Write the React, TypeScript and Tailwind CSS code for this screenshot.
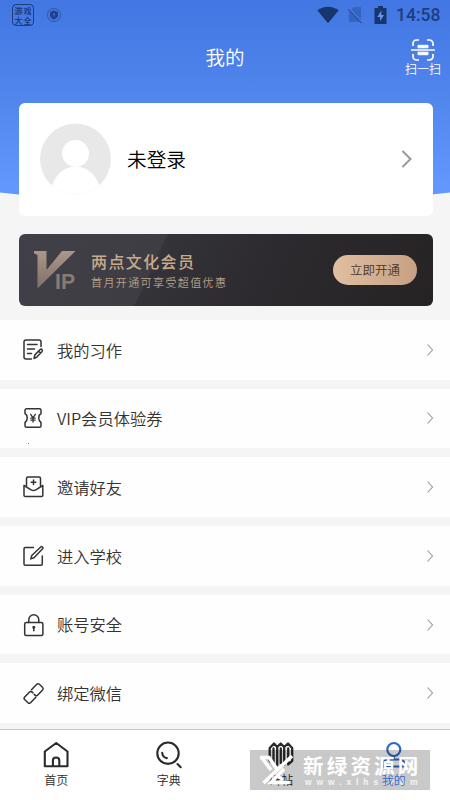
import React from "react";

const Svg = ({
  size = 22,
  className = "",
  children,
}: {
  size?: number;
  className?: string;
  children: React.ReactNode;
}) => (
  <svg
    width={size}
    height={size}
    viewBox={`0 0 ${size} ${size}`}
    fill="none"
    stroke="currentColor"
    strokeWidth={1.5}
    strokeLinecap="round"
    strokeLinejoin="round"
    className={className}
  >
    {children}
  </svg>
);

const menuItems = [
  {
    label: "我的习作",
    icon: (
      <Svg>
        <path d="M9.500 20H4a2 2 0 0 1-2-2V3a2 2 0 0 1 2-2h13a2 2 0 0 1 2 2v4.500M5.500 5.500H15M5.500 10h7M5.500 14.500h4" />
        <path d="m12 19.500.9-3.600 5.300-5.400c1.200-1.100 2.900.5 1.900 1.900l-5.300 5.700-2.800 1.400Zm4.500-7.500 2 2" />
      </Svg>
    ),
  },
  {
    label: "VIP会员体验券",
    icon: (
      <Svg>
        <path d="M4.500 1.800h13A1.500 1.500 0 0 1 19 3.300v3.200c-3 1.800-3 7.200 0 9v3.200a1.500 1.500 0 0 1-1.500 1.500h-13A1.500 1.500 0 0 1 3 18.700v-3.200c3-1.800 3-7.200 0-9V3.300a1.500 1.500 0 0 1 1.500-1.500Z" />
        <path strokeWidth={1.3} d="m8.700 7.300 2.300 3.500 2.300-3.500M11 10.800V15M8.800 11.100h4.400M8.800 13.100h4.400" />
      </Svg>
    ),
  },
  {
    label: "邀请好友",
    icon: (
      <Svg>
        <path d="M4.500 10V2.500A1.500 1.500 0 0 1 6 1h11a1.500 1.500 0 0 1 1.500 1.500V10M11.500 4v4.600M9.200 6.300h4.600" />
        <path d="M2 9.500v9.800c0 .7.500 1.300 1.300 1.300h16.200c.8 0 1.300-.6 1.300-1.300V9.500l-7 4.400c-1.500.9-3.200.9-4.700 0L2 9.500Z" />
      </Svg>
    ),
  },
  {
    label: "进入学校",
    icon: (
      <Svg>
        <path d="M11.500 2.500H3.200A1.200 1.200 0 0 0 2 3.700v15.400c0 .7.500 1.200 1.200 1.200h15.900c.7 0 1.200-.5 1.200-1.200V11" />
        <path d="m8.800 13.900 1-3.400 8.900-8.500c1.200-1 2.900.6 1.900 1.800L12 12.700l-3.200 1.200Z" />
      </Svg>
    ),
  },
  {
    label: "账号安全",
    icon: (
      <Svg size={24}>
        <rect x="2.700" y="9.500" width="18.200" height="13" rx="1.500" />
        <path d="M6.800 9.500V6.800a5 5 0 0 1 10 0v2.700M11.800 14.500v3.200" />
        <circle cx="11.800" cy="14.200" r=".8" fill="currentColor" />
      </Svg>
    ),
  },
  {
    label: "绑定微信",
    icon: (
      <Svg size={24}>
        <path d="m9.500 8.800 5-5.300c.9-.9 1.900-1 2.800-.2l3.200 2.900c.9.900.9 1.900.1 2.800L15.800 14c-.7.700-1.500.9-2.400.5" />
        <path d="M9.800 10.800c-1-.5-1.800-.4-2.500.4l-4.600 4.900c-.8.900-.8 1.900.1 2.700L6 21.700c.9.800 2 .7 2.800-.2l5-5.300" />
        <path d="m9.800 10.800 1.200 1M13.400 14.500l-1.200-1.100" />
      </Svg>
    ),
  },
];

const tabs = [
  {
    label: "首页",
    icon: (
      <Svg size={28}>
        <path strokeWidth={2.100} d="M2.800 10.500 14.200 2l11.300 8.500v14.800H2.800V10.500Zm8.100 14.500v-5.500c0-4 6.400-4 6.400 0V25" />
      </Svg>
    ),
  },
  {
    label: "字典",
    icon: (
      <Svg size={28}>
        <circle cx="13" cy="12.200" r="10.700" strokeWidth={2.100} />
        <path strokeWidth={2.100} d="M7.200 11.700c.2 2.800 2 4.900 4.600 5.400M22.500 23l3.200 3.200" />
      </Svg>
    ),
  },
  {
    label: "碑帖",
    icon: (
      <Svg size={28}>
        <path
          strokeWidth={2.300}
          d="M2.700 20V7L7 2.500 10.200 6v18M6.500 7.500v15L2.700 20M10.200 6l3.500-3.500L17.200 6v18M13.800 7.500V22M17.200 6l3.800-3.500L25.200 7v13l-4 3.500v-16"
        />
      </Svg>
    ),
  },
  {
    label: "我的",
    active: true,
    icon: (
      <Svg size={28}>
        <circle cx="13.800" cy="8.500" r="6.500" strokeWidth={2.200} />
        <path strokeWidth={2.200} d="M13.800 15.500v3M3 25.500v-2a5 5 0 0 1 5-5h11.600a5 5 0 0 1 5 5v2H3Z" />
      </Svg>
    ),
  },
];

const StatusBar = () => (
  <div className="flex h-[30px] items-center justify-between pl-3 pr-[10px] text-[#1d3e7e]">
    <div className="flex items-center gap-[13px]">
      <div className="grid h-[22px] w-[22px] grid-cols-2 place-items-center rounded-[4px] border border-current px-px text-[8px] font-bold leading-[9px]">
        <span>游</span>
        <span>戏</span>
        <span>大</span>
        <span>全</span>
      </div>
      <svg width="14" height="14" viewBox="0 0 14 14" className="opacity-90">
        <circle cx="7" cy="7" r="6.500" fill="none" stroke="currentColor" strokeWidth=".6" />
        <path d="m7 2.500 4 1.400v3.400c0 2.200-1.800 3.400-4 4.400-2.200-1-4-2.200-4-4.400V3.900l4-1.400Z" fill="currentColor" />
        <path d="M7 5v3.500M6 6.500h2" stroke="#4d78cf" strokeWidth=".7" />
      </svg>
    </div>
    <div className="flex items-center">
      <svg width="22" height="18" viewBox="0 0 22 18" fill="#17356f">
        <path d="M.3 4.200C6.500-.5 15.500-.5 21.700 4.200L11 17.300.3 4.200Z" />
      </svg>
      <svg width="15" height="18" viewBox="0 0 15 18" className="ml-[9px]">
        <path d="M1 6 5.500 1h7.500v15H1V6Z" fill="#3465bf" />
        <path d="m.5 2 13.500 14.500" stroke="#477be0" strokeWidth="2" />
        <path d="m0 3 13.500 14" stroke="#2952a3" strokeWidth="1.100" />
      </svg>
      <svg width="14" height="18" viewBox="0 0 14 18" className="ml-[11px]">
        <path d="M4 0h5v2h3.500v16H.5V2H4V0Z" fill="#17356f" />
        <path d="M7.300 4.500 3.300 11h2.800v4.300L10 9H7.300V4.500Z" fill="#6794ec" />
      </svg>
      <span className="ml-[8px] w-[44px] whitespace-nowrap pt-px font-[Roboto] text-[17.500px] font-medium leading-none">
        14:58
      </span>
    </div>
  </div>
);

const Header = () => (
  <header className="grid grid-cols-[1fr_auto_1fr] pt-[7px] text-white">
    <h1 className="col-start-2 pt-[6px] text-[19.500px] font-[350] leading-[28px]">我的</h1>
    <div className="flex flex-col items-center justify-self-end pr-[9px] pt-[2px]">
      <svg width="24" height="22" viewBox="0 0 24 22" fill="none" stroke="currentColor" strokeWidth="1.700">
        <path d="M2 7V4.500A3.500 3.500 0 0 1 5.500 1H8M16 1h2.500A3.500 3.500 0 0 1 22 4.500V7M2 15v2.500A3.500 3.500 0 0 0 5.500 21H8M16 21h2.500a3.500 3.500 0 0 0 3.500-3.500V15M0 11h24" />
        <path d="M7 6.300h10v2.500H7zM7 13.200h10v2.500H7z" fill="currentColor" strokeWidth="1" />
      </svg>
      <span className="pb-px text-[12px] font-[350] leading-[15px]">扫一扫</span>
    </div>
  </header>
);

const VipBanner = () => (
  <section className="ml-[19px] mr-[17px] mt-[18px] flex h-[72px] items-center rounded-[6px] bg-[linear-gradient(115deg,#414048_0%,#3e3d44_33%,#343339_33.500%,#2c2a2e_60%,#252323_100%)] pl-[15px] pr-[16px]">
    <svg width="44" height="40" viewBox="0 0 44 40" className="overflow-visible">
      <defs>
        <linearGradient id="vip" x1="0" x2="0" y1="0" y2="1">
          <stop offset="0" stopColor="#aa978c" />
          <stop offset="1" stopColor="#806f68" />
        </linearGradient>
      </defs>
      <path d="M0 1h12.500v19L28 1h13.500L3.500 38.500V5L0 3.500V1Z" fill="url(#vip)" />
      <text x="21" y="38.500" fill="#8b7a72" fontSize="22" fontWeight="700" fontFamily="Liberation Sans, sans-serif" textLength="20" lengthAdjust="spacingAndGlyphs">
        IP
      </text>
    </svg>
    <div className="ml-[13px] flex-1 whitespace-nowrap text-[#c7aa8c]">
      <div className="text-[16px] font-medium leading-[22px] tracking-[1.400px]">两点文化会员</div>
      <div className="pt-px text-[11px] font-[350] leading-[18px] tracking-[1.400px] text-[#b9a189]">首月开通可享受超值优惠</div>
    </div>
    <button className="h-[30px] w-[84px] rounded-full bg-linear-to-r from-[#dfc0a0] to-[#c7a083] text-[12.500px] font-[350] text-[#493729]">
      立即开通
    </button>
  </section>
);

const Watermark = () => (
  <div className="absolute bottom-[10px] right-[20px] flex h-10 w-[180px] bg-black/21 text-white">
    <svg width="50" height="40" viewBox="0 0 50 40" fill="none" stroke="currentColor" strokeWidth="3.500">
      <path d="M10 7.500h9l7.500 11M42 6 13.500 33M12 8l9 12" />
      <path d="M34 19 21 32.500h18.500M28 26l5 4" />
    </svg>
    <div className="flex flex-col whitespace-nowrap pt-[4px]">
      <span className="ml-[3px] text-[20.500px] font-bold leading-[22px] tracking-[3.200px]">新绿资源网</span>
      <span className="ml-[5px] pt-px font-['Liberation_Sans'] text-[8.500px] font-bold leading-[10px] tracking-[4.900px] text-white/80">
        www.xlhs.com
      </span>
    </div>
  </div>
);

export default function App() {
  return (
    <div className="relative flex h-[800px] w-[450px] flex-col overflow-hidden bg-[#f5f5f5] font-['Noto_Sans_CJK_SC',sans-serif]">
      {/* blue backdrop with a curved lower edge */}
      <svg className="absolute left-0 top-0" width="450" height="216" viewBox="0 0 450 216">
        <defs>
          <linearGradient id="backdrop" x1="0" x2="0" y1="0" y2="1">
            <stop offset="0" stopColor="#4276e2" />
            <stop offset=".45" stopColor="#5085ec" />
            <stop offset=".9" stopColor="#6297fd" />
          </linearGradient>
        </defs>
        <path d="M0 0h450v192.500Q225 220 0 192.500Z" fill="url(#backdrop)" />
      </svg>

      <div className="relative flex flex-1 flex-col">
        <StatusBar />
        <Header />

        <section className="ml-[19px] mr-[17px] mt-[25.500px] flex h-[113.500px] items-center rounded-[6px] bg-white pl-[21px] pr-[19px]">
          <svg width="72" height="72" viewBox="0 0 72 72">
            <clipPath id="avatar">
              <circle cx="35.500" cy="36" r="35.500" />
            </clipPath>
            <g clipPath="url(#avatar)">
              <rect width="72" height="72" fill="#e8e8e8" />
              <circle cx="35.500" cy="30.500" r="13.500" fill="#fff" />
              <path d="M10.500 69c2-14 12-25.500 25-25.500S59 55 61 69v3H10.500Z" fill="#fff" />
            </g>
          </svg>
          <span className="ml-[15px] flex-1 text-[19.700px] font-[350] text-black">未登录</span>
          <svg width="14" height="20" viewBox="0 0 14 20" fill="none" stroke="#999" strokeWidth="2">
            <path d="m2.500 2 8 8-8 8" />
          </svg>
        </section>

        <VipBanner />

        <nav className="mt-[14px] flex flex-col gap-[9.200px]">
          {menuItems.map((item) => (
            <a key={item.label} className="flex h-[59.500px] items-center bg-[#fefefe] pl-[22px] pr-[14px] text-[#333]">
              <span className="flex w-[35px]">{item.icon}</span>
              <span className="flex-1 text-[16.300px] font-[350]">{item.label}</span>
              <svg width="12" height="14" viewBox="0 0 12 14" fill="none" stroke="#999" strokeWidth="1.100">
                <path d="m3.500 1.500 5 5.500-5 5.500" />
              </svg>
            </a>
          ))}
        </nav>
      </div>

      {/* stray speck under the coupon row */}
      <span className="absolute left-[28px] top-[443px] h-px w-px bg-[#777]" />

      <footer className="relative grid h-[71px] shrink-0 grid-cols-4 border-t border-[#c4c4c4] bg-white">
        {tabs.map((tab) => (
          <a
            key={tab.label}
            className={`flex flex-col items-center pt-[11px] ${tab.active ? "text-[#3368c8]" : "text-[#2b2b2b]"}`}
          >
            {tab.icon}
            <span className={`pt-px text-[12px] font-[350] leading-[20px] ${tab.active ? "relative z-10" : ""}`}>
              {tab.label}
            </span>
          </a>
        ))}
        <Watermark />
      </footer>
    </div>
  );
}
